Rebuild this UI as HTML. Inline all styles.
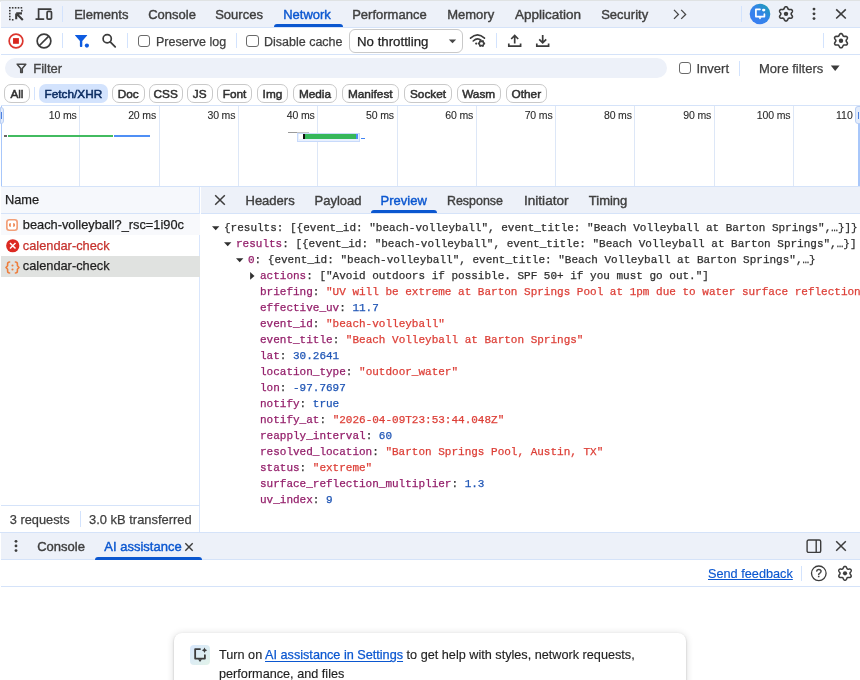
<!DOCTYPE html><html><head><meta charset="utf-8"><style>html,body{margin:0;padding:0;}body{width:860px;height:680px;overflow:hidden;position:relative;background:#fff;font-family:"Liberation Sans",sans-serif;}#root{position:absolute;left:0;top:0;width:860px;height:680px;overflow:hidden;background:#fff;will-change:transform;}</style></head><body><div id="root">
<div style="position:absolute;left:0px;top:0px;width:860px;height:1px;background:#dfe2e3"></div>
<div style="position:absolute;left:0px;top:1px;width:860px;height:0.6px;background:#e6e9ee"></div>
<div style="position:absolute;left:1px;top:1px;width:859px;height:26px;background:#edf1f9"></div>
<div style="position:absolute;left:1px;top:27px;width:859px;height:1px;background:#d5e3f9"></div>
<svg style="position:absolute;left:8px;top:6px;overflow:visible" width="17" height="17" viewBox="0 0 17 17"><g fill="#3c3c3c"><rect x="1.0" y="1" width="1.6" height="1.6"/><rect x="3.9" y="1" width="1.6" height="1.6"/><rect x="6.8" y="1" width="1.6" height="1.6"/><rect x="9.7" y="1" width="1.6" height="1.6"/><rect x="12.6" y="1" width="1.6" height="1.6"/><rect x="1" y="3.9" width="1.6" height="1.6"/><rect x="1" y="6.8" width="1.6" height="1.6"/><rect x="1" y="9.7" width="1.6" height="1.6"/><rect x="1" y="12.6" width="1.6" height="1.6"/><rect x="13" y="3.9" width="1.6" height="1.6"/><rect x="3.9" y="13" width="1.6" height="1.6"/></g><path d="M8.2,7.4 L14,7.4 M8.2,7.4 L8.2,13.3 M8.8,8 L14.8,14" stroke="#3c3c3c" stroke-width="2.1" fill="none"/></svg>
<svg style="position:absolute;left:35px;top:7px;overflow:visible" width="18" height="14" viewBox="0 0 18 14"><path d="M3.6,12 V2.2 H15.8" stroke="#3c3c3c" stroke-width="1.7" fill="none" stroke-linecap="round"/><path d="M1.2,12.1 H8.5" stroke="#3c3c3c" stroke-width="1.8" stroke-linecap="round"/><rect x="12.1" y="4.4" width="4.4" height="7.8" rx="1.2" stroke="#3c3c3c" stroke-width="1.7" fill="none"/></svg>
<div style="position:absolute;left:62px;top:6px;width:1px;height:16px;background:#d3e3fd"></div>
<div style="position:absolute;left:74.2px;top:8px;font-family:'Liberation Sans', sans-serif;font-size:13px;line-height:13px;color:#3f3f3f;font-weight:normal;white-space:pre;-webkit-text-stroke:0.4px #3f3f3f;">Elements</div>
<div style="position:absolute;left:148.2px;top:8px;font-family:'Liberation Sans', sans-serif;font-size:13px;line-height:13px;color:#3f3f3f;font-weight:normal;white-space:pre;-webkit-text-stroke:0.4px #3f3f3f;">Console</div>
<div style="position:absolute;left:215.2px;top:8px;font-family:'Liberation Sans', sans-serif;font-size:13px;line-height:13px;color:#3f3f3f;font-weight:normal;white-space:pre;-webkit-text-stroke:0.4px #3f3f3f;">Sources</div>
<div style="position:absolute;left:283.2px;top:8px;font-family:'Liberation Sans', sans-serif;font-size:13px;line-height:13px;color:#0b57d0;font-weight:normal;white-space:pre;-webkit-text-stroke:0.4px #0b57d0;">Network</div>
<div style="position:absolute;left:352.2px;top:8px;font-family:'Liberation Sans', sans-serif;font-size:13px;line-height:13px;color:#3f3f3f;font-weight:normal;white-space:pre;-webkit-text-stroke:0.4px #3f3f3f;">Performance</div>
<div style="position:absolute;left:447.2px;top:8px;font-family:'Liberation Sans', sans-serif;font-size:13px;line-height:13px;color:#3f3f3f;font-weight:normal;white-space:pre;-webkit-text-stroke:0.4px #3f3f3f;">Memory</div>
<div style="position:absolute;left:515.2px;top:8px;font-family:'Liberation Sans', sans-serif;font-size:13px;line-height:13px;color:#3f3f3f;font-weight:normal;white-space:pre;-webkit-text-stroke:0.4px #3f3f3f;transform:scaleX(1.04);transform-origin:0 0;">Application</div>
<div style="position:absolute;left:601.2px;top:8px;font-family:'Liberation Sans', sans-serif;font-size:13px;line-height:13px;color:#3f3f3f;font-weight:normal;white-space:pre;-webkit-text-stroke:0.4px #3f3f3f;">Security</div>
<div style="position:absolute;left:274px;top:24px;width:69px;height:3px;background:#0b57d0;border-radius:3px 3px 0 0"></div>
<svg style="position:absolute;left:672px;top:8px;overflow:visible" width="16" height="12" viewBox="0 0 16 12"><path d="M2,1.9 L6.4,6.4 L2,10.9 M9.2,1.9 L13.6,6.4 L9.2,10.9" stroke="#474747" stroke-width="1.35" fill="none"/></svg>
<div style="position:absolute;left:741px;top:6px;width:1px;height:16px;background:#d3e3fd"></div>
<svg style="position:absolute;left:749px;top:3px;overflow:visible" width="22" height="22" viewBox="0 0 22 22"><defs><linearGradient id="aig" x1="0" y1="1" x2="1" y2="0"><stop offset="0" stop-color="#3a7bf5"/><stop offset="0.55" stop-color="#3385e8"/><stop offset="1" stop-color="#17a2a8"/></linearGradient></defs><circle cx="11" cy="11" r="10.3" fill="url(#aig)"/><path d="M11,6.3 H6.9 V13.6 H15.4 V11.2" stroke="#fff" stroke-width="1.7" fill="none" stroke-linejoin="round" stroke-linecap="round"/><path d="M9.4,14.2 L11,16.6 L12.6,14.2 Z" fill="#fff"/><ellipse cx="14.7" cy="7.1" rx="1.7" ry="1.3" fill="#fff"/></svg>
<svg style="position:absolute;left:777px;top:5px;overflow:visible" width="18" height="18" viewBox="0 0 18 18"><path d="M14.20,8.85 L14.20,8.99 L14.19,9.12 L14.18,9.26 L14.24,9.40 L14.33,9.55 L14.44,9.71 L14.56,9.88 L14.69,10.06 L14.81,10.25 L14.94,10.44 L15.06,10.65 L15.17,10.85 L15.26,11.07 L15.34,11.28 L15.40,11.50 L15.43,11.71 L15.41,11.91 L15.33,12.07 L15.24,12.24 L15.15,12.40 L15.05,12.56 L14.95,12.72 L14.85,12.87 L14.69,12.98 L14.49,13.06 L14.28,13.12 L14.05,13.17 L13.82,13.19 L13.59,13.20 L13.35,13.20 L13.12,13.19 L12.89,13.17 L12.67,13.15 L12.47,13.13 L12.27,13.12 L12.10,13.11 L11.95,13.14 L11.83,13.21 L11.72,13.28 L11.60,13.35 L11.48,13.42 L11.36,13.48 L11.24,13.54 L11.14,13.66 L11.06,13.82 L10.97,13.99 L10.89,14.18 L10.80,14.38 L10.70,14.58 L10.59,14.79 L10.48,15.00 L10.35,15.20 L10.21,15.38 L10.06,15.56 L9.90,15.71 L9.74,15.85 L9.56,15.93 L9.37,15.94 L9.19,15.95 L9.00,15.95 L8.81,15.95 L8.63,15.94 L8.44,15.93 L8.26,15.85 L8.10,15.71 L7.94,15.56 L7.79,15.38 L7.65,15.20 L7.52,15.00 L7.41,14.79 L7.30,14.58 L7.20,14.38 L7.11,14.18 L7.03,13.99 L6.94,13.82 L6.86,13.66 L6.76,13.54 L6.64,13.48 L6.52,13.42 L6.40,13.35 L6.28,13.28 L6.17,13.21 L6.05,13.14 L5.90,13.11 L5.73,13.12 L5.53,13.13 L5.33,13.15 L5.11,13.17 L4.88,13.19 L4.65,13.20 L4.41,13.20 L4.18,13.19 L3.95,13.17 L3.72,13.12 L3.51,13.06 L3.31,12.98 L3.15,12.87 L3.05,12.72 L2.95,12.56 L2.85,12.40 L2.76,12.24 L2.67,12.07 L2.59,11.91 L2.57,11.71 L2.60,11.50 L2.66,11.28 L2.74,11.07 L2.83,10.85 L2.94,10.65 L3.06,10.44 L3.19,10.25 L3.31,10.06 L3.44,9.88 L3.56,9.71 L3.67,9.55 L3.76,9.40 L3.82,9.26 L3.81,9.12 L3.80,8.99 L3.80,8.85 L3.80,8.71 L3.81,8.58 L3.82,8.44 L3.76,8.30 L3.67,8.15 L3.56,7.99 L3.44,7.82 L3.31,7.64 L3.19,7.45 L3.06,7.26 L2.94,7.05 L2.83,6.85 L2.74,6.63 L2.66,6.42 L2.60,6.20 L2.57,5.99 L2.59,5.79 L2.67,5.63 L2.76,5.46 L2.85,5.30 L2.95,5.14 L3.05,4.98 L3.15,4.83 L3.31,4.72 L3.51,4.64 L3.72,4.58 L3.95,4.53 L4.18,4.51 L4.41,4.50 L4.65,4.50 L4.88,4.51 L5.11,4.53 L5.33,4.55 L5.53,4.57 L5.73,4.58 L5.90,4.59 L6.05,4.56 L6.17,4.49 L6.28,4.42 L6.40,4.35 L6.52,4.28 L6.64,4.22 L6.76,4.16 L6.86,4.04 L6.94,3.88 L7.03,3.71 L7.11,3.52 L7.20,3.32 L7.30,3.12 L7.41,2.91 L7.52,2.70 L7.65,2.50 L7.79,2.32 L7.94,2.14 L8.10,1.99 L8.26,1.85 L8.44,1.77 L8.63,1.76 L8.81,1.75 L9.00,1.75 L9.19,1.75 L9.37,1.76 L9.56,1.77 L9.74,1.85 L9.90,1.99 L10.06,2.14 L10.21,2.32 L10.35,2.50 L10.48,2.70 L10.59,2.91 L10.70,3.12 L10.80,3.32 L10.89,3.52 L10.97,3.71 L11.06,3.88 L11.14,4.04 L11.24,4.16 L11.36,4.22 L11.48,4.28 L11.60,4.35 L11.72,4.42 L11.83,4.49 L11.95,4.56 L12.10,4.59 L12.27,4.58 L12.47,4.57 L12.67,4.55 L12.89,4.53 L13.12,4.51 L13.35,4.50 L13.59,4.50 L13.82,4.51 L14.05,4.53 L14.28,4.58 L14.49,4.64 L14.69,4.72 L14.85,4.83 L14.95,4.98 L15.05,5.14 L15.15,5.30 L15.24,5.46 L15.33,5.63 L15.41,5.79 L15.43,5.99 L15.40,6.20 L15.34,6.42 L15.26,6.63 L15.17,6.85 L15.06,7.05 L14.94,7.26 L14.81,7.45 L14.69,7.64 L14.56,7.82 L14.44,7.99 L14.33,8.15 L14.24,8.30 L14.18,8.44 L14.19,8.58 L14.20,8.71Z" stroke="#3c3c3c" stroke-width="1.6" fill="none" stroke-linejoin="round"/><circle cx="9" cy="8.85" r="2.2" fill="#3c3c3c"/></svg>
<svg style="position:absolute;left:810px;top:5px;overflow:visible" width="8" height="18" viewBox="0 0 8 18"><circle cx="4" cy="4.1" r="1.45" fill="#3c3c3c"/><circle cx="4" cy="8.85" r="1.45" fill="#3c3c3c"/><circle cx="4" cy="13.6" r="1.45" fill="#3c3c3c"/></svg>
<svg style="position:absolute;left:834px;top:7px;overflow:visible" width="14" height="14" viewBox="0 0 14 14"><path d="M2.2,2.3 L11.8,11.5 M11.8,2.3 L2.2,11.5" stroke="#3c3c3c" stroke-width="1.6"/></svg>
<div style="position:absolute;left:1px;top:54px;width:859px;height:1px;background:#d5e3f9"></div>
<svg style="position:absolute;left:7px;top:32px;overflow:visible" width="18" height="18" viewBox="0 0 18 18"><circle cx="9" cy="8.95" r="6.85" stroke="#dc362e" stroke-width="1.7" fill="none"/><rect x="6.05" y="6.1" width="5.85" height="5.7" fill="#d8261e"/></svg>
<svg style="position:absolute;left:35px;top:32px;overflow:visible" width="18" height="18" viewBox="0 0 18 18"><circle cx="9" cy="8.95" r="6.85" stroke="#3c3c3c" stroke-width="1.7" fill="none"/><path d="M13.8,4.15 L4.2,13.75" stroke="#3c3c3c" stroke-width="1.7"/></svg>
<div style="position:absolute;left:62px;top:33px;width:1px;height:15px;background:#d3e3fd"></div>
<svg style="position:absolute;left:74px;top:34px;overflow:visible" width="16" height="15" viewBox="0 0 16 15"><path d="M1.4,0.9 H12.8 Q13.6,0.9 13.1,1.6 L8.3,6.9 V12.2 Q8.3,12.9 7.6,12.9 H6.6 Q5.9,12.9 5.9,12.2 V6.9 L1.1,1.6 Q0.6,0.9 1.4,0.9 Z" fill="#0e5be0"/><circle cx="12.9" cy="11.6" r="2.1" fill="#0e5be0"/></svg>
<svg style="position:absolute;left:101px;top:33px;overflow:visible" width="17" height="17" viewBox="0 0 17 17"><circle cx="6.2" cy="5.8" r="4.1" stroke="#3c3c3c" stroke-width="1.7" fill="none"/><path d="M9.2,8.8 L14.2,13.8" stroke="#3c3c3c" stroke-width="1.8" stroke-linecap="round"/></svg>
<div style="position:absolute;left:127px;top:33px;width:1px;height:15px;background:#d3e3fd"></div>
<div style="position:absolute;left:137.9px;top:34.6px;width:12.4px;height:12.4px;border:1.35px solid #6a6a6a;border-radius:3px;box-sizing:border-box"></div>
<div style="position:absolute;left:156px;top:36px;font-family:'Liberation Sans', sans-serif;font-size:12.5px;line-height:12.5px;color:#3f3f3f;font-weight:normal;white-space:pre;-webkit-text-stroke:0.25px #3f3f3f;">Preserve log</div>
<div style="position:absolute;left:236px;top:33px;width:1px;height:15px;background:#d3e3fd"></div>
<div style="position:absolute;left:246.2px;top:34.6px;width:12.4px;height:12.4px;border:1.35px solid #6a6a6a;border-radius:3px;box-sizing:border-box"></div>
<div style="position:absolute;left:264px;top:36px;font-family:'Liberation Sans', sans-serif;font-size:12.5px;line-height:12.5px;color:#3f3f3f;font-weight:normal;white-space:pre;-webkit-text-stroke:0.25px #3f3f3f;">Disable cache</div>
<div style="position:absolute;left:349px;top:29px;width:114px;height:24px;border:1px solid #c9c9c9;border-radius:6px;box-sizing:border-box;background:#fff"></div>
<div style="position:absolute;left:357px;top:35px;font-family:'Liberation Sans', sans-serif;font-size:13px;line-height:13px;color:#1f1f1f;font-weight:normal;white-space:pre;-webkit-text-stroke:0.25px #1f1f1f;transform:scaleX(1.02);transform-origin:0 0;">No throttling</div>
<svg style="position:absolute;left:448px;top:39px;overflow:visible" width="10" height="5" viewBox="0 0 10 5"><path d="M0.8,0.5 H8.2 L4.5,4.2 Z" fill="#474747"/></svg>
<svg style="position:absolute;left:469px;top:33px;overflow:visible" width="18" height="14" viewBox="0 0 18 14"><path d="M1.5,5.2 Q8.5,-1.5 15.5,5.2" stroke="#3c3c3c" stroke-width="1.6" fill="none" stroke-linecap="round"/><path d="M4.2,8 Q8.3,4.2 12,7.2" stroke="#3c3c3c" stroke-width="1.6" fill="none" stroke-linecap="round"/><circle cx="7.2" cy="10.6" r="1.1" fill="#3c3c3c"/><path d="M15.50,10.50 L15.50,10.58 L15.50,10.66 L15.49,10.74 L15.48,10.81 L15.47,10.89 L15.46,10.97 L15.38,11.03 L15.23,11.08 L15.08,11.12 L14.91,11.15 L14.75,11.17 L14.60,11.18 L14.45,11.19 L14.37,11.22 L14.35,11.27 L14.33,11.31 L14.31,11.36 L14.28,11.41 L14.26,11.45 L14.23,11.50 L14.21,11.54 L14.18,11.59 L14.15,11.63 L14.12,11.68 L14.09,11.72 L14.05,11.76 L14.07,11.84 L14.14,11.98 L14.21,12.12 L14.27,12.27 L14.32,12.42 L14.37,12.58 L14.40,12.73 L14.39,12.83 L14.33,12.88 L14.26,12.93 L14.20,12.97 L14.13,13.02 L14.07,13.06 L14.00,13.10 L13.93,13.14 L13.86,13.17 L13.79,13.21 L13.72,13.24 L13.65,13.27 L13.58,13.30 L13.48,13.26 L13.36,13.16 L13.25,13.04 L13.15,12.91 L13.05,12.79 L12.96,12.66 L12.88,12.53 L12.81,12.48 L12.76,12.48 L12.71,12.49 L12.66,12.49 L12.60,12.50 L12.55,12.50 L12.50,12.50 L12.45,12.50 L12.40,12.50 L12.34,12.49 L12.29,12.49 L12.24,12.48 L12.19,12.48 L12.12,12.53 L12.04,12.66 L11.95,12.79 L11.85,12.91 L11.75,13.04 L11.64,13.16 L11.52,13.26 L11.42,13.30 L11.35,13.27 L11.28,13.24 L11.21,13.21 L11.14,13.17 L11.07,13.14 L11.00,13.10 L10.93,13.06 L10.87,13.02 L10.80,12.97 L10.74,12.93 L10.67,12.88 L10.61,12.83 L10.60,12.73 L10.63,12.58 L10.68,12.42 L10.73,12.27 L10.79,12.12 L10.86,11.98 L10.93,11.84 L10.95,11.76 L10.91,11.72 L10.88,11.68 L10.85,11.63 L10.82,11.59 L10.79,11.54 L10.77,11.50 L10.74,11.45 L10.72,11.41 L10.69,11.36 L10.67,11.31 L10.65,11.27 L10.63,11.22 L10.55,11.19 L10.40,11.18 L10.25,11.17 L10.09,11.15 L9.92,11.12 L9.77,11.08 L9.62,11.03 L9.54,10.97 L9.53,10.89 L9.52,10.81 L9.51,10.74 L9.50,10.66 L9.50,10.58 L9.50,10.50 L9.50,10.42 L9.50,10.34 L9.51,10.26 L9.52,10.19 L9.53,10.11 L9.54,10.03 L9.62,9.97 L9.77,9.92 L9.92,9.88 L10.09,9.85 L10.25,9.83 L10.40,9.82 L10.55,9.81 L10.63,9.78 L10.65,9.73 L10.67,9.69 L10.69,9.64 L10.72,9.59 L10.74,9.55 L10.77,9.50 L10.79,9.46 L10.82,9.41 L10.85,9.37 L10.88,9.32 L10.91,9.28 L10.95,9.24 L10.93,9.16 L10.86,9.02 L10.79,8.88 L10.73,8.73 L10.68,8.58 L10.63,8.42 L10.60,8.27 L10.61,8.17 L10.67,8.12 L10.74,8.07 L10.80,8.03 L10.87,7.98 L10.93,7.94 L11.00,7.90 L11.07,7.86 L11.14,7.83 L11.21,7.79 L11.28,7.76 L11.35,7.73 L11.42,7.70 L11.52,7.74 L11.64,7.84 L11.75,7.96 L11.85,8.09 L11.95,8.21 L12.04,8.34 L12.12,8.47 L12.19,8.52 L12.24,8.52 L12.29,8.51 L12.34,8.51 L12.40,8.50 L12.45,8.50 L12.50,8.50 L12.55,8.50 L12.60,8.50 L12.66,8.51 L12.71,8.51 L12.76,8.52 L12.81,8.52 L12.88,8.47 L12.96,8.34 L13.05,8.21 L13.15,8.09 L13.25,7.96 L13.36,7.84 L13.48,7.74 L13.58,7.70 L13.65,7.73 L13.72,7.76 L13.79,7.79 L13.86,7.83 L13.93,7.86 L14.00,7.90 L14.07,7.94 L14.13,7.98 L14.20,8.03 L14.26,8.07 L14.33,8.12 L14.39,8.17 L14.40,8.27 L14.37,8.42 L14.32,8.58 L14.27,8.73 L14.21,8.88 L14.14,9.02 L14.07,9.16 L14.05,9.24 L14.09,9.28 L14.12,9.32 L14.15,9.37 L14.18,9.41 L14.21,9.46 L14.23,9.50 L14.26,9.55 L14.28,9.59 L14.31,9.64 L14.33,9.69 L14.35,9.73 L14.37,9.78 L14.45,9.81 L14.60,9.82 L14.75,9.83 L14.91,9.85 L15.08,9.88 L15.23,9.92 L15.38,9.97 L15.46,10.03 L15.47,10.11 L15.48,10.19 L15.49,10.26 L15.50,10.34 L15.50,10.42Z" stroke="#3c3c3c" stroke-width="1.3" fill="none"/></svg>
<div style="position:absolute;left:496px;top:33px;width:1px;height:15px;background:#d3e3fd"></div>
<svg style="position:absolute;left:507px;top:34px;overflow:visible" width="16" height="14" viewBox="0 0 16 14"><path d="M7.7,9.5 V1.8 M4.2,5 L7.7,1.5 L11.2,5" stroke="#3c3c3c" stroke-width="1.7" fill="none"/><path d="M1.8,9.5 V12.2 H13.6 V9.5" stroke="#3c3c3c" stroke-width="1.7" fill="none"/></svg>
<svg style="position:absolute;left:535px;top:34px;overflow:visible" width="16" height="14" viewBox="0 0 16 14"><path d="M7.7,1 V8.6 M4.2,5.3 L7.7,8.8 L11.2,5.3" stroke="#3c3c3c" stroke-width="1.7" fill="none"/><path d="M1.8,9.5 V12.2 H13.6 V9.5" stroke="#3c3c3c" stroke-width="1.7" fill="none"/></svg>
<div style="position:absolute;left:823px;top:33px;width:1px;height:15px;background:#d3e3fd"></div>
<svg style="position:absolute;left:832px;top:32px;overflow:visible" width="18" height="18" viewBox="0 0 18 18"><path d="M14.20,8.70 L14.20,8.84 L14.19,8.97 L14.18,9.11 L14.24,9.25 L14.33,9.40 L14.44,9.56 L14.56,9.73 L14.69,9.91 L14.81,10.10 L14.94,10.29 L15.06,10.50 L15.17,10.70 L15.26,10.92 L15.34,11.13 L15.40,11.35 L15.43,11.56 L15.41,11.76 L15.33,11.92 L15.24,12.09 L15.15,12.25 L15.05,12.41 L14.95,12.57 L14.85,12.72 L14.69,12.83 L14.49,12.91 L14.28,12.97 L14.05,13.02 L13.82,13.04 L13.59,13.05 L13.35,13.05 L13.12,13.04 L12.89,13.02 L12.67,13.00 L12.47,12.98 L12.27,12.97 L12.10,12.96 L11.95,12.99 L11.83,13.06 L11.72,13.13 L11.60,13.20 L11.48,13.27 L11.36,13.33 L11.24,13.39 L11.14,13.51 L11.06,13.67 L10.97,13.84 L10.89,14.03 L10.80,14.23 L10.70,14.43 L10.59,14.64 L10.48,14.85 L10.35,15.05 L10.21,15.23 L10.06,15.41 L9.90,15.56 L9.74,15.70 L9.56,15.78 L9.37,15.79 L9.19,15.80 L9.00,15.80 L8.81,15.80 L8.63,15.79 L8.44,15.78 L8.26,15.70 L8.10,15.56 L7.94,15.41 L7.79,15.23 L7.65,15.05 L7.52,14.85 L7.41,14.64 L7.30,14.43 L7.20,14.23 L7.11,14.03 L7.03,13.84 L6.94,13.67 L6.86,13.51 L6.76,13.39 L6.64,13.33 L6.52,13.27 L6.40,13.20 L6.28,13.13 L6.17,13.06 L6.05,12.99 L5.90,12.96 L5.73,12.97 L5.53,12.98 L5.33,13.00 L5.11,13.02 L4.88,13.04 L4.65,13.05 L4.41,13.05 L4.18,13.04 L3.95,13.02 L3.72,12.97 L3.51,12.91 L3.31,12.83 L3.15,12.72 L3.05,12.57 L2.95,12.41 L2.85,12.25 L2.76,12.09 L2.67,11.92 L2.59,11.76 L2.57,11.56 L2.60,11.35 L2.66,11.13 L2.74,10.92 L2.83,10.70 L2.94,10.50 L3.06,10.29 L3.19,10.10 L3.31,9.91 L3.44,9.73 L3.56,9.56 L3.67,9.40 L3.76,9.25 L3.82,9.11 L3.81,8.97 L3.80,8.84 L3.80,8.70 L3.80,8.56 L3.81,8.43 L3.82,8.29 L3.76,8.15 L3.67,8.00 L3.56,7.84 L3.44,7.67 L3.31,7.49 L3.19,7.30 L3.06,7.11 L2.94,6.90 L2.83,6.70 L2.74,6.48 L2.66,6.27 L2.60,6.05 L2.57,5.84 L2.59,5.64 L2.67,5.48 L2.76,5.31 L2.85,5.15 L2.95,4.99 L3.05,4.83 L3.15,4.68 L3.31,4.57 L3.51,4.49 L3.72,4.43 L3.95,4.38 L4.18,4.36 L4.41,4.35 L4.65,4.35 L4.88,4.36 L5.11,4.38 L5.33,4.40 L5.53,4.42 L5.73,4.43 L5.90,4.44 L6.05,4.41 L6.17,4.34 L6.28,4.27 L6.40,4.20 L6.52,4.13 L6.64,4.07 L6.76,4.01 L6.86,3.89 L6.94,3.73 L7.03,3.56 L7.11,3.37 L7.20,3.17 L7.30,2.97 L7.41,2.76 L7.52,2.55 L7.65,2.35 L7.79,2.17 L7.94,1.99 L8.10,1.84 L8.26,1.70 L8.44,1.62 L8.63,1.61 L8.81,1.60 L9.00,1.60 L9.19,1.60 L9.37,1.61 L9.56,1.62 L9.74,1.70 L9.90,1.84 L10.06,1.99 L10.21,2.17 L10.35,2.35 L10.48,2.55 L10.59,2.76 L10.70,2.97 L10.80,3.17 L10.89,3.37 L10.97,3.56 L11.06,3.73 L11.14,3.89 L11.24,4.01 L11.36,4.07 L11.48,4.13 L11.60,4.20 L11.72,4.27 L11.83,4.34 L11.95,4.41 L12.10,4.44 L12.27,4.43 L12.47,4.42 L12.67,4.40 L12.89,4.38 L13.12,4.36 L13.35,4.35 L13.59,4.35 L13.82,4.36 L14.05,4.38 L14.28,4.43 L14.49,4.49 L14.69,4.57 L14.85,4.68 L14.95,4.83 L15.05,4.99 L15.15,5.15 L15.24,5.31 L15.33,5.48 L15.41,5.64 L15.43,5.84 L15.40,6.05 L15.34,6.27 L15.26,6.48 L15.17,6.70 L15.06,6.90 L14.94,7.11 L14.81,7.30 L14.69,7.49 L14.56,7.67 L14.44,7.84 L14.33,8.00 L14.24,8.15 L14.18,8.29 L14.19,8.43 L14.20,8.56Z" stroke="#3c3c3c" stroke-width="1.6" fill="none" stroke-linejoin="round"/><circle cx="9" cy="8.7" r="2.2" fill="#3c3c3c"/></svg>
<div style="position:absolute;left:5px;top:58px;width:661.5px;height:20px;background:#edf1f9;border-radius:10px"></div>
<svg style="position:absolute;left:15.8px;top:62.6px;overflow:visible" width="11" height="11" viewBox="0 0 11 11"><path d="M1.2,1.2 H9.8 L6.3,5.5 V9.6 H4.7 V5.5 Z" stroke="#474747" stroke-width="1.5" fill="none" stroke-linejoin="round"/></svg>
<div style="position:absolute;left:33.2px;top:62px;font-family:'Liberation Sans', sans-serif;font-size:13px;line-height:13px;color:#474747;font-weight:normal;white-space:pre;-webkit-text-stroke:0.35px #474747;">Filter</div>
<div style="position:absolute;left:678.6px;top:61.6px;width:12.6px;height:12.6px;border:1.35px solid #6a6a6a;border-radius:3px;box-sizing:border-box"></div>
<div style="position:absolute;left:696.5px;top:62px;font-family:'Liberation Sans', sans-serif;font-size:13px;line-height:13px;color:#3f3f3f;font-weight:normal;white-space:pre;-webkit-text-stroke:0.25px #3f3f3f;">Invert</div>
<div style="position:absolute;left:739px;top:61px;width:1px;height:15px;background:#d3e3fd"></div>
<div style="position:absolute;left:759px;top:62px;font-family:'Liberation Sans', sans-serif;font-size:13px;line-height:13px;color:#3f3f3f;font-weight:normal;white-space:pre;-webkit-text-stroke:0.25px #3f3f3f;">More filters</div>
<svg style="position:absolute;left:830px;top:65px;overflow:visible" width="11" height="7" viewBox="0 0 11 7"><path d="M0.8,0.5 H9.6 L5.2,6 Z" fill="#3c3c3c"/></svg>
<div style="position:absolute;left:4.2px;top:84px;width:25.5px;height:19px;border:1px solid #c9c9c9;border-radius:7px;box-sizing:border-box"></div>
<div style="position:absolute;left:4.2px;top:89px;font-family:'Liberation Sans', sans-serif;font-size:11.8px;line-height:11.8px;color:#303030;font-weight:normal;white-space:pre;-webkit-text-stroke:0.5px #303030;width:25.50px;text-align:center;">All</div>
<div style="position:absolute;left:39px;top:84px;width:68.7px;height:19px;background:#d3e3fd;border-radius:7px"></div>
<div style="position:absolute;left:39px;top:89px;font-family:'Liberation Sans', sans-serif;font-size:11.8px;line-height:11.8px;color:#0c2d62;font-weight:normal;white-space:pre;-webkit-text-stroke:0.5px #0c2d62;width:68.70px;text-align:center;">Fetch/XHR</div>
<div style="position:absolute;left:111.6px;top:84px;width:33.1px;height:19px;border:1px solid #c9c9c9;border-radius:7px;box-sizing:border-box"></div>
<div style="position:absolute;left:111.6px;top:89px;font-family:'Liberation Sans', sans-serif;font-size:11.8px;line-height:11.8px;color:#303030;font-weight:normal;white-space:pre;-webkit-text-stroke:0.5px #303030;width:33.10px;text-align:center;">Doc</div>
<div style="position:absolute;left:148.8px;top:84px;width:33.8px;height:19px;border:1px solid #c9c9c9;border-radius:7px;box-sizing:border-box"></div>
<div style="position:absolute;left:148.8px;top:89px;font-family:'Liberation Sans', sans-serif;font-size:11.8px;line-height:11.8px;color:#303030;font-weight:normal;white-space:pre;-webkit-text-stroke:0.5px #303030;width:33.80px;text-align:center;">CSS</div>
<div style="position:absolute;left:186.7px;top:84px;width:26.1px;height:19px;border:1px solid #c9c9c9;border-radius:7px;box-sizing:border-box"></div>
<div style="position:absolute;left:186.7px;top:89px;font-family:'Liberation Sans', sans-serif;font-size:11.8px;line-height:11.8px;color:#303030;font-weight:normal;white-space:pre;-webkit-text-stroke:0.5px #303030;width:26.10px;text-align:center;">JS</div>
<div style="position:absolute;left:216.7px;top:84px;width:35.6px;height:19px;border:1px solid #c9c9c9;border-radius:7px;box-sizing:border-box"></div>
<div style="position:absolute;left:216.7px;top:89px;font-family:'Liberation Sans', sans-serif;font-size:11.8px;line-height:11.8px;color:#303030;font-weight:normal;white-space:pre;-webkit-text-stroke:0.5px #303030;width:35.60px;text-align:center;">Font</div>
<div style="position:absolute;left:256.5px;top:84px;width:31.9px;height:19px;border:1px solid #c9c9c9;border-radius:7px;box-sizing:border-box"></div>
<div style="position:absolute;left:256.5px;top:89px;font-family:'Liberation Sans', sans-serif;font-size:11.8px;line-height:11.8px;color:#303030;font-weight:normal;white-space:pre;-webkit-text-stroke:0.5px #303030;width:31.90px;text-align:center;">Img</div>
<div style="position:absolute;left:293px;top:84px;width:44px;height:19px;border:1px solid #c9c9c9;border-radius:7px;box-sizing:border-box"></div>
<div style="position:absolute;left:293px;top:89px;font-family:'Liberation Sans', sans-serif;font-size:11.8px;line-height:11.8px;color:#303030;font-weight:normal;white-space:pre;-webkit-text-stroke:0.5px #303030;width:44.00px;text-align:center;">Media</div>
<div style="position:absolute;left:341.6px;top:84px;width:57.4px;height:19px;border:1px solid #c9c9c9;border-radius:7px;box-sizing:border-box"></div>
<div style="position:absolute;left:341.6px;top:89px;font-family:'Liberation Sans', sans-serif;font-size:11.8px;line-height:11.8px;color:#303030;font-weight:normal;white-space:pre;-webkit-text-stroke:0.5px #303030;width:57.40px;text-align:center;">Manifest</div>
<div style="position:absolute;left:404.3px;top:84px;width:47.5px;height:19px;border:1px solid #c9c9c9;border-radius:7px;box-sizing:border-box"></div>
<div style="position:absolute;left:404.3px;top:89px;font-family:'Liberation Sans', sans-serif;font-size:11.8px;line-height:11.8px;color:#303030;font-weight:normal;white-space:pre;-webkit-text-stroke:0.5px #303030;width:47.50px;text-align:center;">Socket</div>
<div style="position:absolute;left:456.5px;top:84px;width:44.3px;height:19px;border:1px solid #c9c9c9;border-radius:7px;box-sizing:border-box"></div>
<div style="position:absolute;left:456.5px;top:89px;font-family:'Liberation Sans', sans-serif;font-size:11.8px;line-height:11.8px;color:#303030;font-weight:normal;white-space:pre;-webkit-text-stroke:0.5px #303030;width:44.30px;text-align:center;">Wasm</div>
<div style="position:absolute;left:505.7px;top:84px;width:41.3px;height:19px;border:1px solid #c9c9c9;border-radius:7px;box-sizing:border-box"></div>
<div style="position:absolute;left:505.7px;top:89px;font-family:'Liberation Sans', sans-serif;font-size:11.8px;line-height:11.8px;color:#303030;font-weight:normal;white-space:pre;-webkit-text-stroke:0.5px #303030;width:41.30px;text-align:center;">Other</div>
<div style="position:absolute;left:34px;top:87px;width:1px;height:13px;background:#d3e3fd"></div>
<div style="position:absolute;left:1px;top:105px;width:859px;height:1px;background:#d5e3f9"></div>
<div style="position:absolute;left:79.3px;top:106px;width:1px;height:80px;background:#dde7f7"></div>
<div style="position:absolute;left:-3.3px;width:80px;top:110px;font-family:'Liberation Sans', sans-serif;font-size:10.5px;line-height:10.5px;color:#2b2b2b;text-align:right;white-space:pre;letter-spacing:-0.15px;-webkit-text-stroke:0.1px #2b2b2b">10 ms</div>
<div style="position:absolute;left:158.6px;top:106px;width:1px;height:80px;background:#dde7f7"></div>
<div style="position:absolute;left:76.0px;width:80px;top:110px;font-family:'Liberation Sans', sans-serif;font-size:10.5px;line-height:10.5px;color:#2b2b2b;text-align:right;white-space:pre;letter-spacing:-0.15px;-webkit-text-stroke:0.1px #2b2b2b">20 ms</div>
<div style="position:absolute;left:237.9px;top:106px;width:1px;height:80px;background:#dde7f7"></div>
<div style="position:absolute;left:155.3px;width:80px;top:110px;font-family:'Liberation Sans', sans-serif;font-size:10.5px;line-height:10.5px;color:#2b2b2b;text-align:right;white-space:pre;letter-spacing:-0.15px;-webkit-text-stroke:0.1px #2b2b2b">30 ms</div>
<div style="position:absolute;left:317.2px;top:106px;width:1px;height:80px;background:#dde7f7"></div>
<div style="position:absolute;left:234.6px;width:80px;top:110px;font-family:'Liberation Sans', sans-serif;font-size:10.5px;line-height:10.5px;color:#2b2b2b;text-align:right;white-space:pre;letter-spacing:-0.15px;-webkit-text-stroke:0.1px #2b2b2b">40 ms</div>
<div style="position:absolute;left:396.5px;top:106px;width:1px;height:80px;background:#dde7f7"></div>
<div style="position:absolute;left:313.9px;width:80px;top:110px;font-family:'Liberation Sans', sans-serif;font-size:10.5px;line-height:10.5px;color:#2b2b2b;text-align:right;white-space:pre;letter-spacing:-0.15px;-webkit-text-stroke:0.1px #2b2b2b">50 ms</div>
<div style="position:absolute;left:475.8px;top:106px;width:1px;height:80px;background:#dde7f7"></div>
<div style="position:absolute;left:393.2px;width:80px;top:110px;font-family:'Liberation Sans', sans-serif;font-size:10.5px;line-height:10.5px;color:#2b2b2b;text-align:right;white-space:pre;letter-spacing:-0.15px;-webkit-text-stroke:0.1px #2b2b2b">60 ms</div>
<div style="position:absolute;left:555.1px;top:106px;width:1px;height:80px;background:#dde7f7"></div>
<div style="position:absolute;left:472.5px;width:80px;top:110px;font-family:'Liberation Sans', sans-serif;font-size:10.5px;line-height:10.5px;color:#2b2b2b;text-align:right;white-space:pre;letter-spacing:-0.15px;-webkit-text-stroke:0.1px #2b2b2b">70 ms</div>
<div style="position:absolute;left:634.4px;top:106px;width:1px;height:80px;background:#dde7f7"></div>
<div style="position:absolute;left:551.8px;width:80px;top:110px;font-family:'Liberation Sans', sans-serif;font-size:10.5px;line-height:10.5px;color:#2b2b2b;text-align:right;white-space:pre;letter-spacing:-0.15px;-webkit-text-stroke:0.1px #2b2b2b">80 ms</div>
<div style="position:absolute;left:713.7px;top:106px;width:1px;height:80px;background:#dde7f7"></div>
<div style="position:absolute;left:631.1px;width:80px;top:110px;font-family:'Liberation Sans', sans-serif;font-size:10.5px;line-height:10.5px;color:#2b2b2b;text-align:right;white-space:pre;letter-spacing:-0.15px;-webkit-text-stroke:0.1px #2b2b2b">90 ms</div>
<div style="position:absolute;left:793.0px;top:106px;width:1px;height:80px;background:#dde7f7"></div>
<div style="position:absolute;left:710.4px;width:80px;top:110px;font-family:'Liberation Sans', sans-serif;font-size:10.5px;line-height:10.5px;color:#2b2b2b;text-align:right;white-space:pre;letter-spacing:-0.15px;-webkit-text-stroke:0.1px #2b2b2b">100 ms</div>
<div style="position:absolute;left:772.8px;width:80px;top:110px;font-family:'Liberation Sans', sans-serif;font-size:10.5px;line-height:10.5px;color:#2b2b2b;text-align:right;-webkit-text-stroke:0.1px #2b2b2b">110</div>
<div style="position:absolute;left:1px;top:106px;width:1px;height:80px;background:#a8c7fa"></div>
<div style="position:absolute;left:0px;top:107px;width:4px;height:17px;background:#e3ecfb;border:1px solid #b9cff5;border-radius:0 3px 3px 0;box-sizing:border-box"></div>
<div style="position:absolute;left:1.2px;top:112px;width:1.2px;height:7px;background:#4a7fe0"></div>
<div style="position:absolute;left:858px;top:124px;width:1.5px;height:62px;background:#a8c7fa"></div>
<div style="position:absolute;left:855px;top:106px;width:6px;height:18px;background:#e3ecfb;border:1px solid #b9cff5;border-radius:3px 0 0 3px;box-sizing:border-box"></div>
<div style="position:absolute;left:857.6px;top:112px;width:1.2px;height:7px;background:#4a7fe0"></div>
<div style="position:absolute;left:4px;top:134.5px;width:2.5px;height:2px;background:#666"></div>
<div style="position:absolute;left:7.7px;top:134.5px;width:105px;height:2px;background:#42bb60"></div>
<div style="position:absolute;left:114.2px;top:134.5px;width:35.8px;height:2px;background:#4f8ff5"></div>
<div style="position:absolute;left:288px;top:131.5px;width:9px;height:1.5px;background:#9a9a9a"></div>
<div style="position:absolute;left:297px;top:131.5px;width:11.5px;height:1.5px;background:#c4c4c4"></div>
<div style="position:absolute;left:297.2px;top:132.6px;width:63px;height:9.1px;background:#e8f0fe;border:1.4px solid #c8dafb;box-sizing:border-box"></div>
<div style="position:absolute;left:299px;top:134.2px;width:3.7px;height:5.3px;background:#fff"></div>
<div style="position:absolute;left:302.7px;top:134.2px;width:2.6px;height:5.3px;background:#111"></div>
<div style="position:absolute;left:305.3px;top:134.2px;width:50.5px;height:5.3px;background:#35b75a"></div>
<div style="position:absolute;left:355.8px;top:134.2px;width:2.3px;height:5.3px;background:#4d8df6"></div>
<div style="position:absolute;left:360.8px;top:137.6px;width:4.5px;height:1.6px;background:#4285f4"></div>
<div style="position:absolute;left:1px;top:186px;width:859px;height:1px;background:#d5e3f9"></div>
<div style="position:absolute;left:1px;top:187px;width:198.5px;height:26px;background:#f6f8fc"></div>
<div style="position:absolute;left:5px;top:194px;font-family:'Liberation Sans', sans-serif;font-size:12.8px;line-height:12.8px;color:#1f1f1f;font-weight:normal;white-space:pre;-webkit-text-stroke:0.25px #1f1f1f;">Name</div>
<div style="position:absolute;left:1px;top:213px;width:198.5px;height:1px;background:#d5e3f9"></div>
<div style="position:absolute;left:198.9px;top:187px;width:1.3px;height:345px;background:#d9e6fc"></div>
<div style="position:absolute;left:1px;top:214px;width:198.5px;height:20.5px;background:#f8f9fc"></div>
<svg style="position:absolute;left:5px;top:218px;overflow:visible" width="14" height="14" viewBox="0 0 14 14"><rect x="1.85" y="1.75" width="10.3" height="10.5" rx="2.4" fill="#fff" stroke="#f2a07a" stroke-width="1.7"/><path d="M5.8,5.1 A1.9,1.9 0 0 0 5.8,8.9 Z M8.2,5.1 A1.9,1.9 0 0 1 8.2,8.9 Z" fill="#ee8550"/></svg>
<div style="position:absolute;left:22.8px;top:219px;font-family:'Liberation Sans', sans-serif;font-size:12.8px;line-height:12.8px;color:#1f1f1f;font-weight:normal;white-space:pre;-webkit-text-stroke:0.25px #1f1f1f;">beach-volleyball?_rsc=1i90c</div>
<svg style="position:absolute;left:5.5px;top:239.2px;overflow:visible" width="13.5" height="13.5" viewBox="0 0 13.5 13.5"><circle cx="6.75" cy="6.75" r="6.6" fill="#dc2a22"/><path d="M4,4 L9.5,9.5 M9.5,4 L4,9.5" stroke="#fff" stroke-width="1.5"/></svg>
<div style="position:absolute;left:22.8px;top:240px;font-family:'Liberation Sans', sans-serif;font-size:12.8px;line-height:12.8px;color:#c6322d;font-weight:normal;white-space:pre;-webkit-text-stroke:0.25px #c6322d;">calendar-check</div>
<div style="position:absolute;left:1px;top:256.3px;width:198.5px;height:20.3px;background:#e0e2e0"></div>
<svg style="position:absolute;left:4.5px;top:260.5px;overflow:visible" width="15" height="13" viewBox="0 0 15 13"><path d="M4.6,1 Q2.6,1 2.6,3 V4.8 L1,6.5 L2.6,8.2 V10 Q2.6,12 4.6,12 M10.4,1 Q12.4,1 12.4,3 V4.8 L14,6.5 L12.4,8.2 V10 Q12.4,12 10.4,12" stroke="#ee7d3b" stroke-width="1.6" fill="none" stroke-linecap="round" stroke-linejoin="round"/><circle cx="7.5" cy="4.5" r="1.05" fill="#ee7d3b"/><circle cx="7.5" cy="8.5" r="1.05" fill="#ee7d3b"/></svg>
<div style="position:absolute;left:22.8px;top:260px;font-family:'Liberation Sans', sans-serif;font-size:12.8px;line-height:12.8px;color:#1f1f1f;font-weight:normal;white-space:pre;-webkit-text-stroke:0.25px #1f1f1f;">calendar-check</div>
<div style="position:absolute;left:1px;top:505px;width:198.5px;height:1px;background:#d5e3f9"></div>
<div style="position:absolute;left:9.8px;top:514px;font-family:'Liberation Sans', sans-serif;font-size:12.8px;line-height:12.8px;color:#3f3f3f;font-weight:normal;white-space:pre;-webkit-text-stroke:0.25px #3f3f3f;">3 requests</div>
<div style="position:absolute;left:79.5px;top:511px;width:1px;height:16px;background:#d3e3fd"></div>
<div style="position:absolute;left:88.5px;top:514px;font-family:'Liberation Sans', sans-serif;font-size:12.8px;line-height:12.8px;color:#3f3f3f;font-weight:normal;white-space:pre;-webkit-text-stroke:0.25px #3f3f3f;transform:scaleX(1.01);transform-origin:0 0;">3.0 kB transferred</div>
<div style="position:absolute;left:200.5px;top:187px;width:659.5px;height:26px;background:#edf1f9"></div>
<div style="position:absolute;left:200.5px;top:212.5px;width:659.5px;height:1px;background:#d5e3f9"></div>
<svg style="position:absolute;left:214px;top:194px;overflow:visible" width="12" height="12" viewBox="0 0 12 12"><path d="M1.2,1.2 L10.8,10.8 M10.8,1.2 L1.2,10.8" stroke="#3c3c3c" stroke-width="1.5"/></svg>
<div style="position:absolute;left:245.5px;top:194px;font-family:'Liberation Sans', sans-serif;font-size:13px;line-height:13px;color:#3f3f3f;font-weight:normal;white-space:pre;-webkit-text-stroke:0.4px #3f3f3f;">Headers</div>
<div style="position:absolute;left:314.5px;top:194px;font-family:'Liberation Sans', sans-serif;font-size:13px;line-height:13px;color:#3f3f3f;font-weight:normal;white-space:pre;-webkit-text-stroke:0.4px #3f3f3f;">Payload</div>
<div style="position:absolute;left:380.59999999999997px;top:194px;font-family:'Liberation Sans', sans-serif;font-size:13px;line-height:13px;color:#0b57d0;font-weight:normal;white-space:pre;-webkit-text-stroke:0.4px #0b57d0;">Preview</div>
<div style="position:absolute;left:446.5px;top:194px;font-family:'Liberation Sans', sans-serif;font-size:13px;line-height:13px;color:#3f3f3f;font-weight:normal;white-space:pre;-webkit-text-stroke:0.4px #3f3f3f;transform:scaleX(0.955);transform-origin:0 0;">Response</div>
<div style="position:absolute;left:523.5px;top:194px;font-family:'Liberation Sans', sans-serif;font-size:13px;line-height:13px;color:#3f3f3f;font-weight:normal;white-space:pre;-webkit-text-stroke:0.4px #3f3f3f;transform:scaleX(1.045);transform-origin:0 0;">Initiator</div>
<div style="position:absolute;left:588.8000000000001px;top:194px;font-family:'Liberation Sans', sans-serif;font-size:13px;line-height:13px;color:#3f3f3f;font-weight:normal;white-space:pre;-webkit-text-stroke:0.4px #3f3f3f;">Timing</div>
<div style="position:absolute;left:370.8px;top:210.3px;width:66px;height:3px;background:#0b57d0;border-radius:3px 3px 0 0"></div>
<div style="position:absolute;left:200.5px;top:214px;width:659.5px;height:291px;overflow:hidden">
<div style="position:absolute;left:23.5px;top:5.5px;height:16px;font-family:'Liberation Mono', monospace;font-size:11px;line-height:16px;white-space:pre"><span style="color:#303030;-webkit-text-stroke:0.25px #303030">{results: [{event_id: "beach-volleyball", event_title: "Beach Volleyball at Barton Springs",…}]}</span></div>
<svg style="position:absolute;left:11.7px;top:11.7px" width="8" height="5" viewBox="0 0 8 5"><path d="M0,0.2 H7.4 L3.7,4.2 Z" fill="#303030"/></svg>
<div style="position:absolute;left:35.5px;top:21.5px;height:16px;font-family:'Liberation Mono', monospace;font-size:11px;line-height:16px;white-space:pre"><span style="color:#94206b;-webkit-text-stroke:0.25px #94206b">results</span><span style="color:#303030;-webkit-text-stroke:0.25px #303030">: [{event_id: "beach-volleyball", event_title: "Beach Volleyball at Barton Springs",…}]</span></div>
<svg style="position:absolute;left:23.7px;top:27.7px" width="8" height="5" viewBox="0 0 8 5"><path d="M0,0.2 H7.4 L3.7,4.2 Z" fill="#303030"/></svg>
<div style="position:absolute;left:47.5px;top:37.5px;height:16px;font-family:'Liberation Mono', monospace;font-size:11px;line-height:16px;white-space:pre"><span style="color:#94206b;-webkit-text-stroke:0.25px #94206b">0</span><span style="color:#303030;-webkit-text-stroke:0.25px #303030">: {event_id: "beach-volleyball", event_title: "Beach Volleyball at Barton Springs",…}</span></div>
<svg style="position:absolute;left:35.7px;top:43.7px" width="8" height="5" viewBox="0 0 8 5"><path d="M0,0.2 H7.4 L3.7,4.2 Z" fill="#303030"/></svg>
<div style="position:absolute;left:59.5px;top:53.5px;height:16px;font-family:'Liberation Mono', monospace;font-size:11px;line-height:16px;white-space:pre"><span style="color:#94206b;-webkit-text-stroke:0.25px #94206b">actions</span><span style="color:#303030;-webkit-text-stroke:0.25px #303030">: ["Avoid outdoors if possible. SPF 50+ if you must go out."]</span></div>
<svg style="position:absolute;left:49.0px;top:57.7px" width="5" height="8" viewBox="0 0 5 8"><path d="M0.1,0.1 V7.7 L4.5,3.9 Z" fill="#303030"/></svg>
<div style="position:absolute;left:59.5px;top:69.5px;height:16px;font-family:'Liberation Mono', monospace;font-size:11px;line-height:16px;white-space:pre"><span style="color:#94206b;-webkit-text-stroke:0.25px #94206b">briefing</span><span style="color:#303030;-webkit-text-stroke:0.25px #303030">: </span><span style="color:#dd3f37;-webkit-text-stroke:0.25px #dd3f37">"UV will be extreme at Barton Springs Pool at 1pm due to water surface reflection and high UV index."</span></div>
<div style="position:absolute;left:59.5px;top:85.5px;height:16px;font-family:'Liberation Mono', monospace;font-size:11px;line-height:16px;white-space:pre"><span style="color:#94206b;-webkit-text-stroke:0.25px #94206b">effective_uv</span><span style="color:#303030;-webkit-text-stroke:0.25px #303030">: </span><span style="color:#1f55b5;-webkit-text-stroke:0.25px #1f55b5">11.7</span></div>
<div style="position:absolute;left:59.5px;top:101.5px;height:16px;font-family:'Liberation Mono', monospace;font-size:11px;line-height:16px;white-space:pre"><span style="color:#94206b;-webkit-text-stroke:0.25px #94206b">event_id</span><span style="color:#303030;-webkit-text-stroke:0.25px #303030">: </span><span style="color:#dd3f37;-webkit-text-stroke:0.25px #dd3f37">"beach-volleyball"</span></div>
<div style="position:absolute;left:59.5px;top:117.5px;height:16px;font-family:'Liberation Mono', monospace;font-size:11px;line-height:16px;white-space:pre"><span style="color:#94206b;-webkit-text-stroke:0.25px #94206b">event_title</span><span style="color:#303030;-webkit-text-stroke:0.25px #303030">: </span><span style="color:#dd3f37;-webkit-text-stroke:0.25px #dd3f37">"Beach Volleyball at Barton Springs"</span></div>
<div style="position:absolute;left:59.5px;top:133.5px;height:16px;font-family:'Liberation Mono', monospace;font-size:11px;line-height:16px;white-space:pre"><span style="color:#94206b;-webkit-text-stroke:0.25px #94206b">lat</span><span style="color:#303030;-webkit-text-stroke:0.25px #303030">: </span><span style="color:#1f55b5;-webkit-text-stroke:0.25px #1f55b5">30.2641</span></div>
<div style="position:absolute;left:59.5px;top:149.5px;height:16px;font-family:'Liberation Mono', monospace;font-size:11px;line-height:16px;white-space:pre"><span style="color:#94206b;-webkit-text-stroke:0.25px #94206b">location_type</span><span style="color:#303030;-webkit-text-stroke:0.25px #303030">: </span><span style="color:#dd3f37;-webkit-text-stroke:0.25px #dd3f37">"outdoor_water"</span></div>
<div style="position:absolute;left:59.5px;top:165.5px;height:16px;font-family:'Liberation Mono', monospace;font-size:11px;line-height:16px;white-space:pre"><span style="color:#94206b;-webkit-text-stroke:0.25px #94206b">lon</span><span style="color:#303030;-webkit-text-stroke:0.25px #303030">: </span><span style="color:#1f55b5;-webkit-text-stroke:0.25px #1f55b5">-97.7697</span></div>
<div style="position:absolute;left:59.5px;top:181.5px;height:16px;font-family:'Liberation Mono', monospace;font-size:11px;line-height:16px;white-space:pre"><span style="color:#94206b;-webkit-text-stroke:0.25px #94206b">notify</span><span style="color:#303030;-webkit-text-stroke:0.25px #303030">: </span><span style="color:#1f55b5;-webkit-text-stroke:0.25px #1f55b5">true</span></div>
<div style="position:absolute;left:59.5px;top:197.5px;height:16px;font-family:'Liberation Mono', monospace;font-size:11px;line-height:16px;white-space:pre"><span style="color:#94206b;-webkit-text-stroke:0.25px #94206b">notify_at</span><span style="color:#303030;-webkit-text-stroke:0.25px #303030">: </span><span style="color:#dd3f37;-webkit-text-stroke:0.25px #dd3f37">"2026-04-09T23:53:44.048Z"</span></div>
<div style="position:absolute;left:59.5px;top:213.5px;height:16px;font-family:'Liberation Mono', monospace;font-size:11px;line-height:16px;white-space:pre"><span style="color:#94206b;-webkit-text-stroke:0.25px #94206b">reapply_interval</span><span style="color:#303030;-webkit-text-stroke:0.25px #303030">: </span><span style="color:#1f55b5;-webkit-text-stroke:0.25px #1f55b5">60</span></div>
<div style="position:absolute;left:59.5px;top:229.5px;height:16px;font-family:'Liberation Mono', monospace;font-size:11px;line-height:16px;white-space:pre"><span style="color:#94206b;-webkit-text-stroke:0.25px #94206b">resolved_location</span><span style="color:#303030;-webkit-text-stroke:0.25px #303030">: </span><span style="color:#dd3f37;-webkit-text-stroke:0.25px #dd3f37">"Barton Springs Pool, Austin, TX"</span></div>
<div style="position:absolute;left:59.5px;top:245.5px;height:16px;font-family:'Liberation Mono', monospace;font-size:11px;line-height:16px;white-space:pre"><span style="color:#94206b;-webkit-text-stroke:0.25px #94206b">status</span><span style="color:#303030;-webkit-text-stroke:0.25px #303030">: </span><span style="color:#dd3f37;-webkit-text-stroke:0.25px #dd3f37">"extreme"</span></div>
<div style="position:absolute;left:59.5px;top:261.5px;height:16px;font-family:'Liberation Mono', monospace;font-size:11px;line-height:16px;white-space:pre"><span style="color:#94206b;-webkit-text-stroke:0.25px #94206b">surface_reflection_multiplier</span><span style="color:#303030;-webkit-text-stroke:0.25px #303030">: </span><span style="color:#1f55b5;-webkit-text-stroke:0.25px #1f55b5">1.3</span></div>
<div style="position:absolute;left:59.5px;top:277.5px;height:16px;font-family:'Liberation Mono', monospace;font-size:11px;line-height:16px;white-space:pre"><span style="color:#94206b;-webkit-text-stroke:0.25px #94206b">uv_index</span><span style="color:#303030;-webkit-text-stroke:0.25px #303030">: </span><span style="color:#1f55b5;-webkit-text-stroke:0.25px #1f55b5">9</span></div>
</div>
<div style="position:absolute;left:0px;top:532px;width:860px;height:1px;background:#d5e3f9"></div>
<div style="position:absolute;left:1px;top:533px;width:859px;height:26px;background:#edf1f9"></div>
<div style="position:absolute;left:1px;top:559px;width:859px;height:1px;background:#d5e3f9"></div>
<svg style="position:absolute;left:12px;top:538px;overflow:visible" width="8" height="16" viewBox="0 0 8 16"><circle cx="4" cy="3.3" r="1.4" fill="#3c3c3c"/><circle cx="4" cy="7.9" r="1.4" fill="#3c3c3c"/><circle cx="4" cy="12.6" r="1.4" fill="#3c3c3c"/></svg>
<div style="position:absolute;left:37.2px;top:540px;font-family:'Liberation Sans', sans-serif;font-size:13px;line-height:13px;color:#3f3f3f;font-weight:normal;white-space:pre;-webkit-text-stroke:0.4px #3f3f3f;">Console</div>
<div style="position:absolute;left:104.3px;top:540px;font-family:'Liberation Sans', sans-serif;font-size:13px;line-height:13px;color:#0b57d0;font-weight:normal;white-space:pre;-webkit-text-stroke:0.4px #0b57d0;">AI assistance</div>
<svg style="position:absolute;left:184px;top:541.5px;overflow:visible" width="10" height="10" viewBox="0 0 10 10"><path d="M1.3,1.3 L8.7,8.7 M8.7,1.3 L1.3,8.7" stroke="#3c3c3c" stroke-width="1.4"/></svg>
<div style="position:absolute;left:94.7px;top:556.5px;width:107.5px;height:3px;background:#0b57d0;border-radius:3px 3px 0 0"></div>
<svg style="position:absolute;left:806px;top:539px;overflow:visible" width="16" height="14" viewBox="0 0 16 14"><rect x="1.1" y="1" width="13.6" height="12.4" rx="1.5" stroke="#3c3c3c" stroke-width="1.4" fill="none"/><path d="M10.2,1 V13.4" stroke="#3c3c3c" stroke-width="1.4"/></svg>
<svg style="position:absolute;left:835px;top:540px;overflow:visible" width="12" height="12" viewBox="0 0 12 12"><path d="M1.2,1.2 L10.8,10.8 M10.8,1.2 L1.2,10.8" stroke="#3c3c3c" stroke-width="1.5"/></svg>
<div style="position:absolute;left:1px;top:586px;width:859px;height:1px;background:#d5e3f9"></div>
<div style="position:absolute;left:708px;top:567px;font-family:'Liberation Sans', sans-serif;font-size:13px;line-height:13px;color:#0b57d0;font-weight:normal;white-space:pre;-webkit-text-stroke:0.15px #0b57d0;transform:scaleX(0.978);transform-origin:0 0;text-decoration:underline;text-underline-offset:1px">Send feedback</div>
<div style="position:absolute;left:801px;top:566px;width:1px;height:15px;background:#d3e3fd"></div>
<svg style="position:absolute;left:810px;top:565px;overflow:visible" width="18" height="17" viewBox="0 0 18 17"><circle cx="8.8" cy="8.3" r="7.3" stroke="#3c3c3c" stroke-width="1.3" fill="none"/><text x="8.8" y="12.2" font-family="Liberation Sans" font-size="11" text-anchor="middle" fill="#3c3c3c" stroke="#3c3c3c" stroke-width="0.4">?</text></svg>
<svg style="position:absolute;left:836px;top:565px;overflow:visible" width="18" height="17" viewBox="0 0 18 17"><path d="M14.00,8.30 L14.00,8.43 L13.99,8.56 L13.98,8.69 L14.04,8.83 L14.13,8.98 L14.24,9.13 L14.36,9.29 L14.49,9.47 L14.62,9.65 L14.75,9.84 L14.87,10.04 L14.98,10.24 L15.08,10.45 L15.15,10.66 L15.21,10.87 L15.24,11.08 L15.23,11.27 L15.15,11.43 L15.06,11.59 L14.98,11.75 L14.88,11.91 L14.79,12.06 L14.69,12.21 L14.53,12.32 L14.33,12.39 L14.12,12.45 L13.90,12.49 L13.67,12.51 L13.44,12.51 L13.21,12.51 L12.98,12.49 L12.76,12.47 L12.54,12.45 L12.34,12.42 L12.15,12.41 L11.98,12.40 L11.83,12.42 L11.72,12.49 L11.61,12.56 L11.50,12.63 L11.39,12.69 L11.27,12.76 L11.15,12.81 L11.06,12.93 L10.98,13.08 L10.90,13.26 L10.82,13.44 L10.73,13.64 L10.64,13.84 L10.54,14.05 L10.43,14.25 L10.31,14.45 L10.17,14.64 L10.03,14.81 L9.88,14.97 L9.71,15.10 L9.54,15.18 L9.36,15.19 L9.18,15.20 L9.00,15.20 L8.82,15.20 L8.64,15.19 L8.46,15.18 L8.29,15.10 L8.12,14.97 L7.97,14.81 L7.83,14.64 L7.69,14.45 L7.57,14.25 L7.46,14.05 L7.36,13.84 L7.27,13.64 L7.18,13.44 L7.10,13.26 L7.02,13.08 L6.94,12.93 L6.85,12.81 L6.73,12.76 L6.61,12.69 L6.50,12.63 L6.39,12.56 L6.28,12.49 L6.17,12.42 L6.02,12.40 L5.85,12.41 L5.66,12.42 L5.46,12.45 L5.24,12.47 L5.02,12.49 L4.79,12.51 L4.56,12.51 L4.33,12.51 L4.10,12.49 L3.88,12.45 L3.67,12.39 L3.47,12.32 L3.31,12.21 L3.21,12.06 L3.12,11.91 L3.02,11.75 L2.94,11.59 L2.85,11.43 L2.77,11.27 L2.76,11.08 L2.79,10.87 L2.85,10.66 L2.92,10.45 L3.02,10.24 L3.13,10.04 L3.25,9.84 L3.38,9.65 L3.51,9.47 L3.64,9.29 L3.76,9.13 L3.87,8.98 L3.96,8.83 L4.02,8.69 L4.01,8.56 L4.00,8.43 L4.00,8.30 L4.00,8.17 L4.01,8.04 L4.02,7.91 L3.96,7.77 L3.87,7.62 L3.76,7.47 L3.64,7.31 L3.51,7.13 L3.38,6.95 L3.25,6.76 L3.13,6.56 L3.02,6.36 L2.92,6.15 L2.85,5.94 L2.79,5.73 L2.76,5.52 L2.77,5.33 L2.85,5.17 L2.94,5.01 L3.02,4.85 L3.12,4.69 L3.21,4.54 L3.31,4.39 L3.47,4.28 L3.67,4.21 L3.88,4.15 L4.10,4.11 L4.33,4.09 L4.56,4.09 L4.79,4.09 L5.02,4.11 L5.24,4.13 L5.46,4.15 L5.66,4.18 L5.85,4.19 L6.02,4.20 L6.17,4.18 L6.28,4.11 L6.39,4.04 L6.50,3.97 L6.61,3.91 L6.73,3.84 L6.85,3.79 L6.94,3.67 L7.02,3.52 L7.10,3.34 L7.18,3.16 L7.27,2.96 L7.36,2.76 L7.46,2.55 L7.57,2.35 L7.69,2.15 L7.83,1.96 L7.97,1.79 L8.12,1.63 L8.29,1.50 L8.46,1.42 L8.64,1.41 L8.82,1.40 L9.00,1.40 L9.18,1.40 L9.36,1.41 L9.54,1.42 L9.71,1.50 L9.88,1.63 L10.03,1.79 L10.17,1.96 L10.31,2.15 L10.43,2.35 L10.54,2.55 L10.64,2.76 L10.73,2.96 L10.82,3.16 L10.90,3.34 L10.98,3.52 L11.06,3.67 L11.15,3.79 L11.27,3.84 L11.39,3.91 L11.50,3.97 L11.61,4.04 L11.72,4.11 L11.83,4.18 L11.98,4.20 L12.15,4.19 L12.34,4.18 L12.54,4.15 L12.76,4.13 L12.98,4.11 L13.21,4.09 L13.44,4.09 L13.67,4.09 L13.90,4.11 L14.12,4.15 L14.33,4.21 L14.53,4.28 L14.69,4.39 L14.79,4.54 L14.88,4.69 L14.98,4.85 L15.06,5.01 L15.15,5.17 L15.23,5.33 L15.24,5.52 L15.21,5.73 L15.15,5.94 L15.08,6.15 L14.98,6.36 L14.87,6.56 L14.75,6.76 L14.62,6.95 L14.49,7.13 L14.36,7.31 L14.24,7.47 L14.13,7.62 L14.04,7.77 L13.98,7.91 L13.99,8.04 L14.00,8.17Z" stroke="#3c3c3c" stroke-width="1.5" fill="none" stroke-linejoin="round"/><circle cx="9" cy="8.3" r="2.1" fill="#3c3c3c"/></svg>
<div style="position:absolute;left:174px;top:632.5px;width:512px;height:80px;background:#fff;border-radius:8px;box-shadow:0 1px 2px rgba(0,0,0,0.22),0 1px 7px 1px rgba(0,0,0,0.12)"></div>
<svg style="position:absolute;left:190px;top:645px;overflow:visible" width="20" height="20" viewBox="0 0 20 20"><defs><linearGradient id="cg" x1="0" y1="0" x2="1" y2="1"><stop offset="0" stop-color="#d7e6fb"/><stop offset="1" stop-color="#e2f3ea"/></linearGradient></defs><rect x="0" y="0" width="20" height="20" rx="4" fill="url(#cg)"/><path d="M10,4.1 H5.15 V13.6 H14.9 V10.2" stroke="#3c3c3c" stroke-width="1.8" fill="none" stroke-linejoin="round" stroke-linecap="round"/><path d="M8,14.2 L10,17.1 L12,14.2 Z" fill="#3c3c3c"/><path d="M14.5,2.6 Q14.9,4.9 17.2,5.3 Q14.9,5.7 14.5,8 Q14.1,5.7 11.8,5.3 Q14.1,4.9 14.5,2.6 Z" fill="#3c3c3c"/></svg>
<div style="position:absolute;left:218.5px;top:649px;font-family:'Liberation Sans', sans-serif;font-size:12.8px;line-height:12.8px;color:#1f1f1f;font-weight:normal;white-space:pre;-webkit-text-stroke:0.15px #1f1f1f;transform:scaleX(0.99);transform-origin:0 0;">Turn on <span style="color:#0b57d0;-webkit-text-stroke:0.25px #0b57d0;text-decoration:underline;text-underline-offset:1.5px">AI assistance in Settings</span> to get help with styles, network requests,</div>
<div style="position:absolute;left:218.5px;top:668px;font-family:'Liberation Sans', sans-serif;font-size:12.8px;line-height:12.8px;color:#1f1f1f;font-weight:normal;white-space:pre;-webkit-text-stroke:0.15px #1f1f1f;transform:scaleX(0.99);transform-origin:0 0;">performance, and files</div>
</div></body></html>
